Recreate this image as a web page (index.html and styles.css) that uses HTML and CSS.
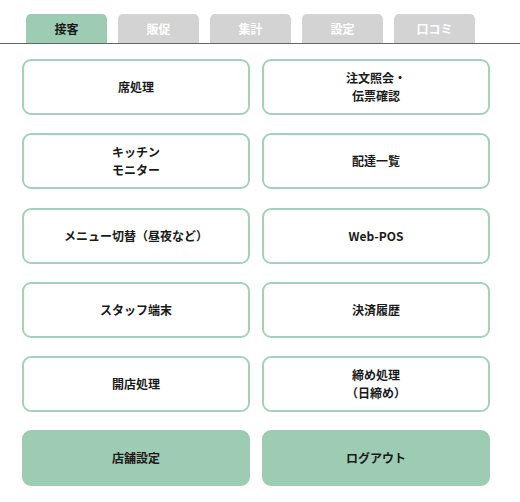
FILE: index.html
```html
<!DOCTYPE html>
<html lang="ja">
<head>
<meta charset="utf-8">
<link rel="stylesheet" href="styles.css">
</head>
<body>
<div class="tabs">
  <div class="tab active">接客</div>
  <div class="tab">販促</div>
  <div class="tab">集計</div>
  <div class="tab">設定</div>
  <div class="tab">口コミ</div>
</div>
<div class="grid">
  <div class="btn">席処理</div>
  <div class="btn">注文照会・<br>伝票確認</div>
  <div class="btn">キッチン<br>モニター</div>
  <div class="btn">配達一覧</div>
  <div class="btn">メニュー切替（昼夜など）</div>
  <div class="btn">Web-POS</div>
  <div class="btn">スタッフ端末</div>
  <div class="btn">決済履歴</div>
  <div class="btn">開店処理</div>
  <div class="btn">締め処理<br>（日締め）</div>
  <div class="btn filled">店舗設定</div>
  <div class="btn filled">ログアウト</div>
</div>
</body>
</html>
```
FILE: styles.css
```css
html, body {
  margin: 0;
  padding: 0;
  background: #fff;
}
body {
  font-family: "Noto Sans CJK JP", "Noto Sans", sans-serif;
  font-weight: bold;
  font-size: 12px;
  color: #1a1a1a;
  width: 520px;
}
.tabs {
  display: flex;
  gap: 11px;
  padding: 14px 0 0 26px;
  border-bottom: 1.5px solid #666;
}
.tab {
  width: 81px;
  height: 29px;
  box-sizing: border-box;
  background: #d3d3d3;
  color: #fff;
  border-radius: 5px 5px 0 0;
  display: flex;
  align-items: center;
  justify-content: center;
  font-size: 12px;
}
.tab.active {
  background: #9dcbb3;
  color: #1a1a1a;
}
.grid {
  display: grid;
  grid-template-columns: 228px 228px;
  column-gap: 12px;
  row-gap: 18.25px;
  padding: 15px 0 0 22px;
}
.btn {
  height: 56px;
  box-sizing: border-box;
  border: 2px solid #a6d0bc;
  border-radius: 9px;
  display: flex;
  align-items: center;
  justify-content: center;
  text-align: center;
  line-height: 18px;
  font-size: 12px;
}
.btn.filled {
  background: #9dcbb3;
  border-color: #9dcbb3;
}
```
